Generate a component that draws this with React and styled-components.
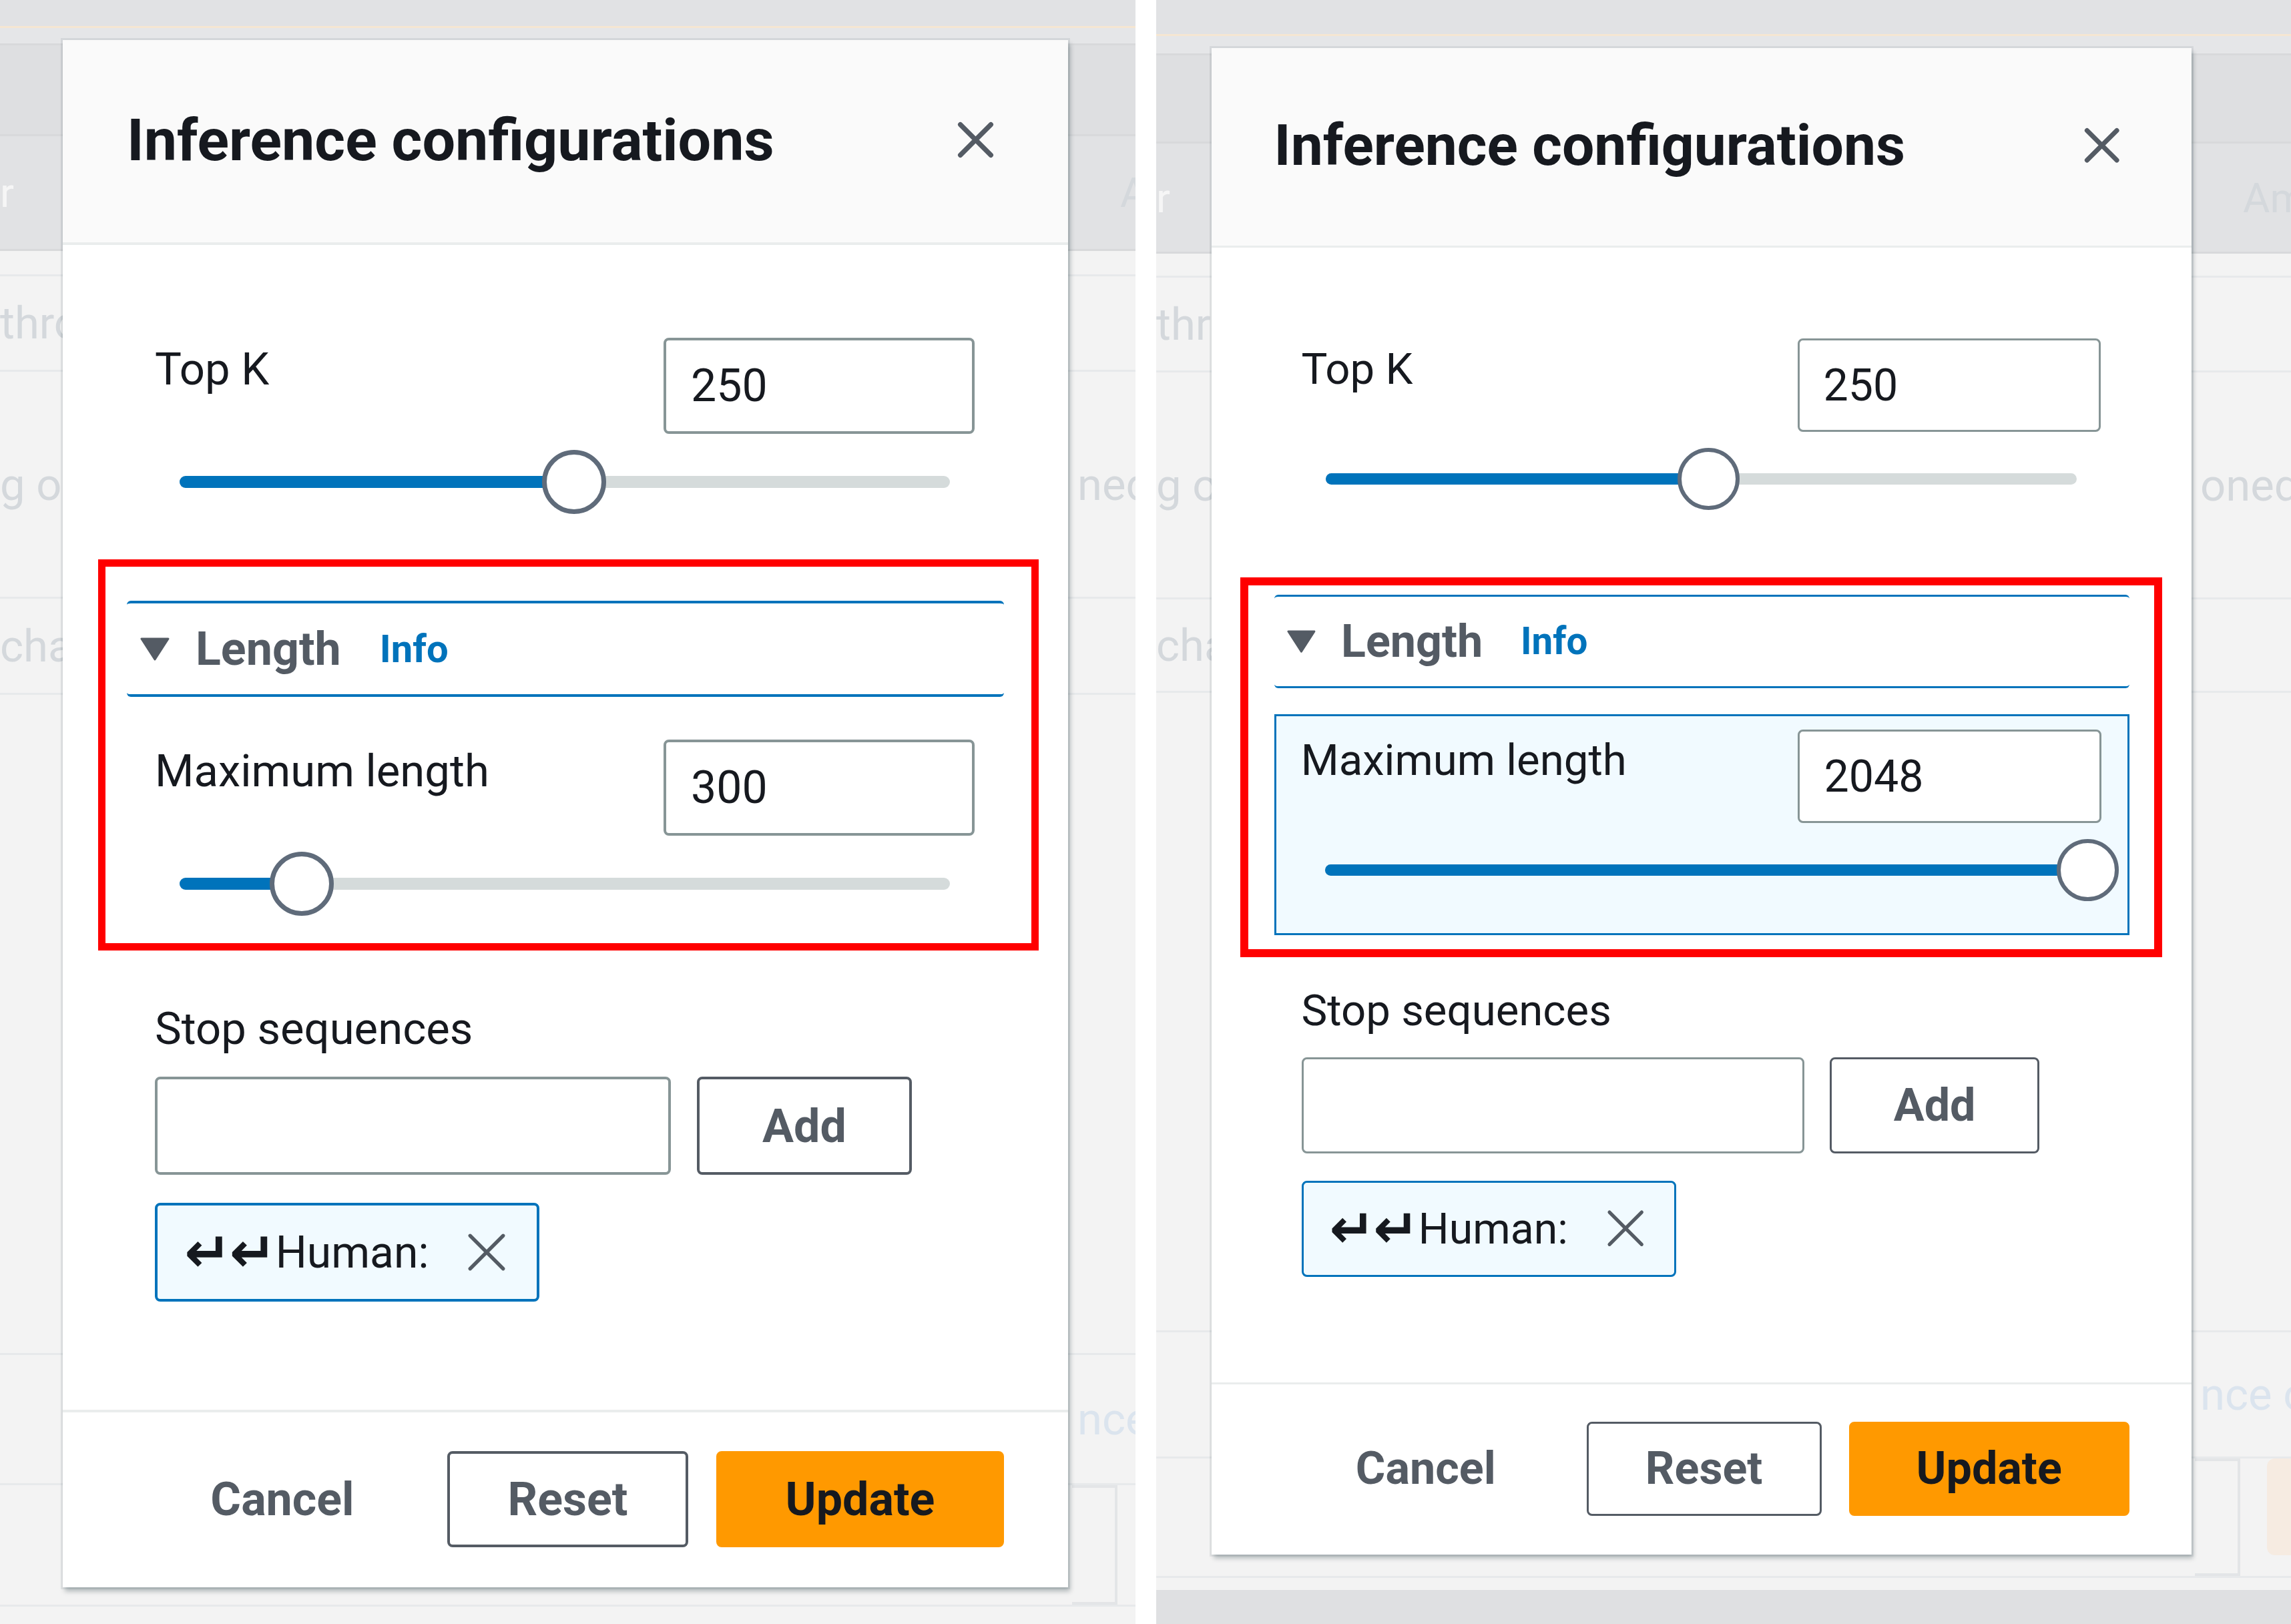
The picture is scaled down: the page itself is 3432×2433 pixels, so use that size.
import React from "react";
import styled, { createGlobalStyle } from "styled-components";

const GlobalStyle = createGlobalStyle`
  html, body {
    margin: 0;
    padding: 0;
    background: #ffffff;
  }
  body {
    font-family: Roboto, "Noto Sans", "DejaVu Sans", sans-serif;
  }
  * {
    box-sizing: border-box;
  }
`;

const panels = [
  {
    key: "short",
    width: 1701,
    topBar: 42,
    dim: [26, 136, 172],
    dimLeft: "r",
    dimRight: "A",
    leftCell: 1606,
    modal: { x: 94, y: 60, zoom: 1 },
    topK: { value: "250", pos: 51.2 },
    maxLen: { value: "300", pos: 15.9 },
    highlight: false,
    red: { x: 147, y: 838, w: 1409, h: 586, t: 11 },
    rows: [
      { h: 38 },
      { h: 143, left: "through" },
      { h: 340, left: "g o", right: "ned g o" },
      { h: 144, left: "chat" },
      { h: 989 },
      { h: 195, right: "nce", link: true },
      { h: 182, box: true },
    ],
    bottomBand: false,
  },
  {
    key: "long",
    width: 1700,
    topBar: 54,
    dim: [29, 132, 165],
    dimLeft: "r",
    dimRight: "Am",
    leftCell: 1556,
    modal: { x: 83, y: 72, zoom: 0.975 },
    topK: { value: "250", pos: 51 },
    maxLen: { value: "2048", pos: 101.4 },
    highlight: true,
    red: { x: 126, y: 865, w: 1381, h: 569, t: 12 },
    rows: [
      { h: 36 },
      { h: 142, left: "through" },
      { h: 340, left: "g o", right: "oned t" },
      { h: 140, left: "chat" },
      { h: 958 },
      { h: 189, right: "nce c", link: true },
      { h: 179, box: true, peach: true },
    ],
    bottomBand: true,
  },
];

/* ---------- page + faded background ---------- */

const Page = styled.div`
  display: flex;
  gap: 31px;
  width: 3432px;
  height: 2433px;
  overflow: hidden;
  background: #ffffff;
`;

const Panel = styled.section`
  position: relative;
  flex: none;
  width: ${(p) => p.$w}px;
  height: 2433px;
  overflow: hidden;
  display: flex;
  flex-direction: column;
  background: #f3f3f3;
`;

const TopBar = styled.div`
  flex: none;
  height: ${(p) => p.$h}px;
  background: #e1e2e4;
  border-bottom: 3px solid #f5e6d2;
`;

const DimRow = styled.div`
  flex: none;
  height: ${(p) => p.$h}px;
  display: flex;
  align-items: center;
  background: ${(p) => p.$tone};
  border-bottom: 3px solid #d8d9db;
  font-size: 62px;
  color: #f6f6f6;
  white-space: nowrap;
`;

const BgRow = styled.div`
  flex: none;
  height: ${(p) => p.$h}px;
  display: flex;
  align-items: center;
  border-bottom: 3px solid #e7e9eb;
  font-size: 67px;
  color: #d4d8dc;
  white-space: nowrap;
`;

const BgLeft = styled.div`
  flex: none;
  width: ${(p) => p.$w}px;
  overflow: hidden;
`;

const BgRight = styled.div`
  flex: 1;
  align-self: stretch;
  display: flex;
  align-items: ${(p) => (p.$box ? "stretch" : "center")};
  gap: 40px;
  overflow: hidden;
  padding: ${(p) => (p.$box ? "0" : "0 0 0 8px")};
  color: ${(p) => (p.$link ? "#dbe4ee" : "#d4d8dc")};
`;

const BgBox = styled.div`
  flex: none;
  width: 88px;
  border: 4px solid #e3e5e7;
  border-left: none;
  margin-left: -20px;
`;

const Peach = styled.div`
  flex: 1;
  align-self: flex-start;
  height: 145px;
  border-radius: 12px 0 0 12px;
  background: #f6ebe1;
`;

const GreenMark = styled.span`
  display: inline-block;
  width: 40px;
  height: 64px;
  margin-right: 24px;
  vertical-align: middle;
  background: #d9e6de;
`;

const BottomBand = styled.div`
  flex: 1;
  margin-top: 18px;
  background: #dfe0e2;
`;

const RedMark = styled.div`
  position: absolute;
  left: ${(p) => p.$x}px;
  top: ${(p) => p.$y}px;
  width: ${(p) => p.$w}px;
  height: ${(p) => p.$h}px;
  border: ${(p) => p.$t}px solid #ff0000;
  pointer-events: none;
`;

/* ---------- modal ---------- */

const ModalFrame = styled.div`
  position: absolute;
  left: ${(p) => p.$x}px;
  top: ${(p) => p.$y}px;
`;

const Modal = styled.div`
  zoom: ${(p) => p.$zoom};
  width: 1506px;
  display: flex;
  flex-direction: column;
  background: #ffffff;
  box-shadow: 0 0 0 3px rgba(0, 28, 36, 0.07), 3px 6px 7px rgba(0, 28, 36, 0.28);
`;

const Header = styled.header`
  height: 307px;
  display: flex;
  align-items: center;
  justify-content: space-between;
  padding: 0 108px 4px 96px;
  background: #fafafa;
  border-bottom: 4px solid #eaeded;
`;

const Title = styled.h2`
  margin: 0;
  font-size: 88px;
  line-height: 1;
  font-weight: 700;
  color: #16191f;
`;

const CloseIcon = styled.svg`
  width: 61px;
  height: 61px;
  display: block;
`;

const Body = styled.div`
  padding: 139px 96px 162px;
  display: flex;
  flex-direction: column;
`;

const Field = styled.div`
  padding: 0 44px 0 42px;
`;

const FieldRow = styled.div`
  display: flex;
  justify-content: space-between;
  align-items: flex-start;
`;

const Label = styled.div`
  padding-top: 8px;
  font-size: 67px;
  line-height: 78px;
  color: #16191f;
`;

const ValueBox = styled.div`
  width: ${(p) => p.$w || 466}px;
  height: ${(p) => p.$h || 144}px;
  display: flex;
  align-items: center;
  padding-left: 37px;
  border: 4px solid #879596;
  border-radius: 8px;
  background: #ffffff;
  font-size: 68px;
  color: #16191f;
`;

const SliderWrap = styled.div`
  height: 96px;
  margin-top: 24px;
  padding: 0 37px;
  display: flex;
  align-items: center;
`;

const Track = styled.div`
  position: relative;
  flex: 1;
  height: 18px;
  border-radius: 9px;
  background: #d5dbdb;
`;

const Fill = styled.div`
  height: 100%;
  border-radius: 9px;
  background: #0073bb;
`;

const Thumb = styled.div`
  position: absolute;
  top: 50%;
  width: 96px;
  height: 96px;
  margin: -48px 0 0 -48px;
  border-radius: 50%;
  background: #ffffff;
  border: 7px solid #5f6b7a;
`;

const Section = styled.div`
  margin-top: 130px;
  height: 144px;
  display: flex;
  align-items: center;
  padding-left: 20px;
  border-top: 4px solid #0073bb;
  border-bottom: 4px solid #0073bb;
  border-radius: 6px;
`;

const Caret = styled.svg`
  width: 44px;
  height: 35px;
  flex: none;
  display: block;
`;

const SectionTitle = styled.span`
  margin-left: 39px;
  font-size: 70px;
  font-weight: 700;
  color: #545b64;
`;

const InfoLink = styled.span`
  margin-left: 58px;
  font-size: 58px;
  font-weight: 700;
  color: #0073bb;
`;

const SectionContent = styled.div`
  margin-top: 40px;
  padding: 20px 40px 49px 38px;
  border: 4px solid ${(p) => (p.$active ? "#0073bb" : "transparent")};
  background: ${(p) => (p.$active ? "#f1faff" : "transparent")};
`;

const StopField = styled(Field)`
  margin-top: 69px;
`;

const InputRow = styled.div`
  margin-top: 33px;
  display: flex;
  gap: 39px;
`;

const Button = styled.div`
  flex: none;
  width: ${(p) => p.$w}px;
  height: ${(p) => p.$h || 144}px;
  display: flex;
  align-items: center;
  justify-content: center;
  border-radius: 8px;
  font-size: 70px;
  font-weight: 700;
  border: 4px solid
    ${(p) => (p.$kind === "normal" ? "#545b64" : p.$kind === "primary" ? "#ff9900" : "transparent")};
  background: ${(p) => (p.$kind === "primary" ? "#ff9900" : "transparent")};
  color: ${(p) => (p.$kind === "primary" ? "#16191f" : "#545b64")};
`;

const Token = styled.div`
  margin-top: 42px;
  width: 576px;
  height: 148px;
  display: flex;
  align-items: center;
  padding: 0 42px 0 40px;
  border: 4px solid #0073bb;
  border-radius: 8px;
  background: #f1faff;
`;

const TokenText = styled.span`
  flex: 1;
  display: flex;
  align-items: center;
  font-size: 66px;
  color: #16191f;
  white-space: nowrap;
`;

const Arrows = styled.span`
  font-family: "DejaVu Sans", sans-serif;
  font-weight: 700;
  font-size: 84px;
  line-height: 1;
  letter-spacing: -3px;
  margin-right: 2px;
`;

const TokenClose = styled.svg`
  width: 66px;
  height: 66px;
  flex: none;
  display: block;
`;

const Footer = styled.footer`
  display: flex;
  justify-content: flex-end;
  gap: 42px;
  padding: 58px 96px 60px;
  border-top: 4px solid #eaeded;
`;

/* ---------- pieces ---------- */

const XIcon = ({ as: Comp, stroke, width }) => (
  <Comp viewBox="0 0 16 16" fill="none">
    <path d="M2 2l12 12M14 2L2 14" stroke={stroke} strokeWidth={width} strokeLinecap="round" />
  </Comp>
);

const Slider = ({ pos }) => (
  <SliderWrap>
    <Track>
      <Fill style={{ width: `${Math.min(pos, 100)}%` }} />
      <Thumb style={{ left: `${pos}%` }} />
    </Track>
  </SliderWrap>
);

const NumberField = ({ label, value, pos }) => (
  <>
    <FieldRow>
      <Label>{label}</Label>
      <ValueBox>{value}</ValueBox>
    </FieldRow>
    <Slider pos={pos} />
  </>
);

const InferenceModal = ({ cfg }) => (
  <Modal $zoom={cfg.modal.zoom}>
    <Header>
      <Title>Inference configurations</Title>
      <XIcon as={CloseIcon} stroke="#545b64" width={1.9} />
    </Header>
    <Body>
      <Field>
        <NumberField label="Top K" value={cfg.topK.value} pos={cfg.topK.pos} />
      </Field>
      <Section>
        <Caret viewBox="0 0 44 35">
          <path d="M2 2h40L22 33z" fill="#545b64" stroke="#545b64" strokeWidth="3" strokeLinejoin="round" />
        </Caret>
        <SectionTitle>Length</SectionTitle>
        <InfoLink>Info</InfoLink>
      </Section>
      <SectionContent $active={cfg.highlight}>
        <NumberField label="Maximum length" value={cfg.maxLen.value} pos={cfg.maxLen.pos} />
      </SectionContent>
      <StopField>
        <Label>Stop sequences</Label>
        <InputRow>
          <ValueBox $w={773} $h={147} />
          <Button $kind="normal" $w={322} $h={147}>
            Add
          </Button>
        </InputRow>
        <Token>
          <TokenText>
            <Arrows>↵↵</Arrows>Human:
          </TokenText>
          <XIcon as={TokenClose} stroke="#545b64" width={1.3} />
        </Token>
      </StopField>
    </Body>
    <Footer>
      <Button $kind="link" $w={410}>
        Cancel
      </Button>
      <Button $kind="normal" $w={361}>
        Reset
      </Button>
      <Button $kind="primary" $w={431}>
        Update
      </Button>
    </Footer>
  </Modal>
);

const ScreenPanel = ({ cfg }) => (
  <Panel $w={cfg.width}>
    <TopBar $h={cfg.topBar} />
    <DimRow $h={cfg.dim[0]} $tone="#e5e6e8" />
    <DimRow $h={cfg.dim[1]} $tone="#dedfe1" />
    <DimRow $h={cfg.dim[2]} $tone="#e1e2e4">
      <BgLeft $w={cfg.leftCell}>{cfg.dimLeft}</BgLeft>
      <BgRight>
        <GreenMark />
        {cfg.dimRight}
      </BgRight>
    </DimRow>
    {cfg.rows.map((row, i) => (
      <BgRow key={i} $h={row.h}>
        <BgLeft $w={cfg.leftCell}>{row.left}</BgLeft>
        <BgRight $link={row.link} $box={row.box}>
          {row.right}
          {row.box && <BgBox />}
          {row.peach && <Peach />}
        </BgRight>
      </BgRow>
    ))}
    {cfg.bottomBand && <BottomBand />}
    <ModalFrame $x={cfg.modal.x} $y={cfg.modal.y}>
      <InferenceModal cfg={cfg} />
    </ModalFrame>
    <RedMark $x={cfg.red.x} $y={cfg.red.y} $w={cfg.red.w} $h={cfg.red.h} $t={cfg.red.t} />
  </Panel>
);

export default function App() {
  return (
    <>
      <GlobalStyle />
      <Page>
        {panels.map((cfg) => (
          <ScreenPanel key={cfg.key} cfg={cfg} />
        ))}
      </Page>
    </>
  );
}
